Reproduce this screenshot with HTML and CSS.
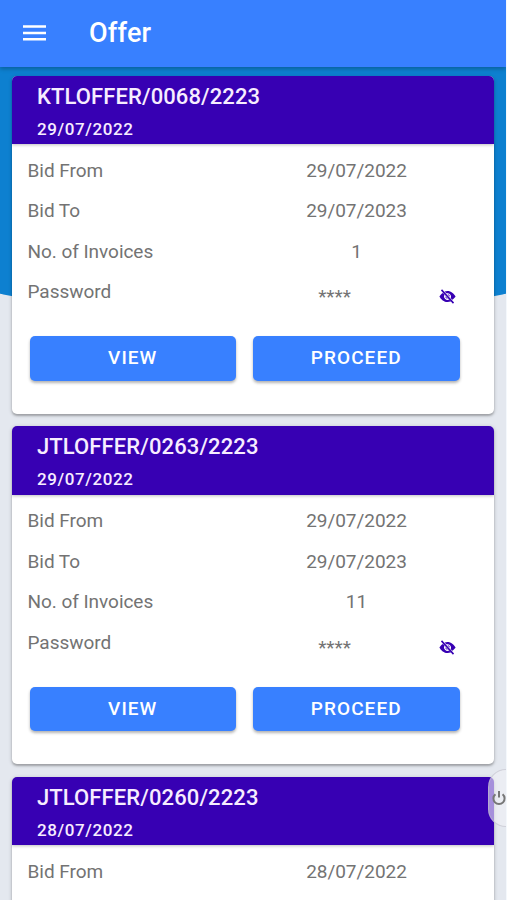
FILE: index.html
```html
<!DOCTYPE html>
<html lang="en">
<head>
    <meta charset="UTF-8">
    <meta name="viewport" content="width=device-width, initial-scale=1.0">
    <title>Offer</title>
    <link rel="stylesheet" href="styles.css">
</head>
<body>
    <div class="app">
        <header class="toolbar">
            <svg class="menu-icon" viewBox="0 0 24 16" fill="#fff">
                <path d="M0 0h24v2.6H0zM0 6.6h24v2.6H0zM0 13.2h24v2.6H0z"/>
            </svg>
            <h1 class="toolbar-title">Offer</h1>
        </header>

        <main class="offers">
            <section class="card">
                <div class="card-header">
                    <h2 class="offer-no">KTLOFFER/0068/2223</h2>
                    <p class="offer-date">29/07/2022</p>
                </div>
                <div class="card-body">
                    <div class="row"><span class="label">Bid From</span><span class="value">29/07/2022</span></div>
                    <div class="row"><span class="label">Bid To</span><span class="value">29/07/2023</span></div>
                    <div class="row"><span class="label">No. of Invoices</span><span class="value">1</span></div>
                    <div class="row">
                        <span class="label">Password</span>
                        <span class="value password">****</span>
                        <svg class="eye-icon" viewBox="0 0 512 512"><use href="#eye-off"/></svg>
                    </div>
                    <div class="actions">
                        <button class="btn">VIEW</button>
                        <button class="btn">PROCEED</button>
                    </div>
                </div>
            </section>

            <section class="card">
                <div class="card-header">
                    <h2 class="offer-no">JTLOFFER/0263/2223</h2>
                    <p class="offer-date">29/07/2022</p>
                </div>
                <div class="card-body">
                    <div class="row"><span class="label">Bid From</span><span class="value">29/07/2022</span></div>
                    <div class="row"><span class="label">Bid To</span><span class="value">29/07/2023</span></div>
                    <div class="row"><span class="label">No. of Invoices</span><span class="value">11</span></div>
                    <div class="row">
                        <span class="label">Password</span>
                        <span class="value password">****</span>
                        <svg class="eye-icon" viewBox="0 0 512 512"><use href="#eye-off"/></svg>
                    </div>
                    <div class="actions">
                        <button class="btn">VIEW</button>
                        <button class="btn">PROCEED</button>
                    </div>
                </div>
            </section>

            <section class="card">
                <div class="card-header">
                    <h2 class="offer-no">JTLOFFER/0260/2223</h2>
                    <p class="offer-date">28/07/2022</p>
                </div>
                <div class="card-body">
                    <div class="row"><span class="label">Bid From</span><span class="value">28/07/2022</span></div>
                </div>
            </section>
        </main>

        <button class="power-btn" aria-label="Log out">
            <svg class="power-icon" viewBox="0 0 14 16" fill="none" stroke="#777" stroke-width="2">
                <path d="M3.4 4.2a5.6 5.6 0 1 0 7.2 0M7 1v6.5"/>
            </svg>
        </button>
    </div>

    <svg width="0" height="0" class="sprite">
        <symbol id="eye-off" viewBox="0 0 512 512">
            <path fill="#3700b3" d="M58 74L92 40L454 438L420 472zM256 88C226 88 196 94 170 105L221 161A110 110 0 0 1 355 306L399 354C447 324 483 283 500 256C451 166 361 88 256 88zM113 151C67 180 32 225 12 256C61 346 151 424 256 424C293 424 327 415 357 401L307 349A110 110 0 0 1 163 199zM256 190L320 262A64 64 0 0 0 256 190zM192 246A64 64 0 0 0 264 320z"/>
        </symbol>
    </svg>
</body>
</html>
```

FILE: styles.css
```css
* {
    box-sizing: border-box;
}

body {
    margin: 0;
    background-color: #f4f8fc;
    font-family: Roboto, sans-serif;
    color: #737373;
}

.app {
    position: relative;
    width: 506px;
    height: 900px;
    overflow: hidden;
    background-color: #e4e8ef;
}

/* blue backdrop with a curved lower edge */
.app::before {
    content: "";
    position: absolute;
    top: 0;
    left: -100px;
    right: -100px;
    height: 315px;
    background-color: #0d80d0;
    border-radius: 0 0 50% 50% / 0 0 70px 70px;
}

.toolbar {
    position: relative;
    display: flex;
    align-items: center;
    height: 67px;
    padding: 0 23px 2px;
    background-color: #3880ff;
    box-shadow: 0 2px 4px rgba(0, 0, 0, 0.25);
}

.menu-icon {
    width: 23px;
    height: 16px;
}

.toolbar-title {
    margin: 0 0 0 43px;
    font-size: 27px;
    font-weight: 500;
    letter-spacing: 0.2px;
    color: #fff;
}

.offers {
    position: relative;
    display: flex;
    flex-direction: column;
    gap: 12.5px;
    padding: 8.5px 12px 0;
}

.card {
    flex: none;
    height: 338px;
    overflow: hidden;
    border-radius: 5px;
    background-color: #fff;
    box-shadow: 0 2px 2px rgba(0, 0, 0, 0.2), 0 1px 4px rgba(0, 0, 0, 0.2);
}

.card-header {
    height: 68.5px;
    padding: 7px 25px 0;
    background-color: #3700b3;
    box-shadow: 0 1px 3px rgba(0, 0, 0, 0.25);
    color: #f7edff;
}

.offer-no {
    margin: 0;
    font-size: 22px;
    font-weight: 500;
    line-height: 27px;
    letter-spacing: 0.1px;
}

.offer-date {
    margin: 9px 0 0;
    font-size: 17px;
    font-weight: 500;
    line-height: 20px;
    letter-spacing: 0.6px;
}

.card-body {
    padding: 5.5px 15.5px 0;
}

.row {
    display: grid;
    grid-template-columns: 228px 202px 1fr;
    height: 40.5px;
    font-size: 19px;
    line-height: 41px;
    letter-spacing: -0.04px;
}

.value {
    text-align: center;
}

.password {
    margin-left: -44px;
    padding-top: 5px;
}

.eye-icon {
    width: 17px;
    height: 17px;
    margin: 17px 0 0 -19px;
}

.actions {
    display: flex;
    gap: 17px;
    padding: 24.5px 19px 0 2px;
}

.btn {
    flex: 1;
    height: 44.5px;
    padding: 0 0 1px;
    border: none;
    border-radius: 5px;
    background-color: #3880ff;
    box-shadow: 0 2px 3px rgba(0, 0, 0, 0.3);
    font-family: inherit;
    font-size: 19px;
    font-weight: 500;
    letter-spacing: 1.05px;
    color: #fff;
}

/* floats over the right edge of the list */
.power-btn {
    position: absolute;
    top: 769px;
    right: -12px;
    width: 30px;
    height: 58px;
    padding: 0 0 0 3px;
    border: 1px solid rgba(190, 190, 200, 0.6);
    border-radius: 18px 0 0 18px;
    background-color: rgba(240, 240, 245, 0.6);
    text-align: left;
}

.power-icon {
    display: block;
    width: 14px;
    height: 16px;
}

.sprite {
    position: absolute;
}
```
